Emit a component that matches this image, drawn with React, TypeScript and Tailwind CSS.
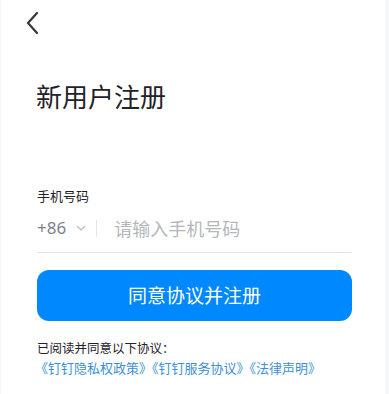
import React from "react";

export default function App() {
  return (
    <div
      className="w-[389px] h-[394px] bg-[#f5f6f8] flex overflow-hidden"
      style={{ fontFamily: '"Noto Sans CJK SC", "Noto Sans", sans-serif' }}
    >
      <div className="ml-[1px] w-[384px] h-full bg-white flex flex-col">
        <div className="h-[46px] pl-[24px] pt-[11px]">
          <svg width="16" height="24" viewBox="0 0 16 24" fill="none">
            <path d="M12 2 L3 12 L12 22" stroke="#333840" strokeWidth="2.2" strokeLinecap="round" strokeLinejoin="round" />
          </svg>
        </div>
        <div className="pl-[35px] mt-[32px] text-[26px] leading-[36px] text-[#1f2329]">新用户注册</div>
        <div className="pl-[36px] mt-[73px] text-[13px] leading-[18px] text-[#1f2329]">手机号码</div>
        <div className="ml-[36px] w-[315px] mt-[8px] h-[40px] flex items-center border-b border-[#e3e4e6] pb-[9px]">
          <span className="text-[17px] text-[#7d8289] leading-[24px]" style={{ fontFamily: '"Noto Sans", sans-serif' }}>+86</span>
          <svg className="ml-[9px]" width="12" height="8" viewBox="0 0 12 8" fill="none">
            <path d="M2 2 L6 6 L10 2" stroke="#b6b9be" strokeWidth="1.2" />
          </svg>
          <div className="ml-[9px] w-px h-[17px] bg-[#e3e4e6]" />
          <span className="ml-[17px] text-[18px] leading-[24px] text-[#b4b7bc]">请输入手机号码</span>
        </div>
        <div className="ml-[36px] w-[315px] mt-[17px] h-[51px] rounded-[12px] bg-[#0089ff] flex items-center justify-center text-white text-[19px]">
          同意协议并注册
        </div>
        <div className="pl-[36px] mt-[18px] text-[12.5px] leading-[18px] text-[#1f2329]">已阅读并同意以下协议：</div>
        <div className="pl-[34px] mt-[2px] text-[13px] leading-[18px] text-[#3b8fd6]">《钉钉隐私权政策》《钉钉服务协议》《法律声明》</div>
      </div>
    </div>
  );
}
